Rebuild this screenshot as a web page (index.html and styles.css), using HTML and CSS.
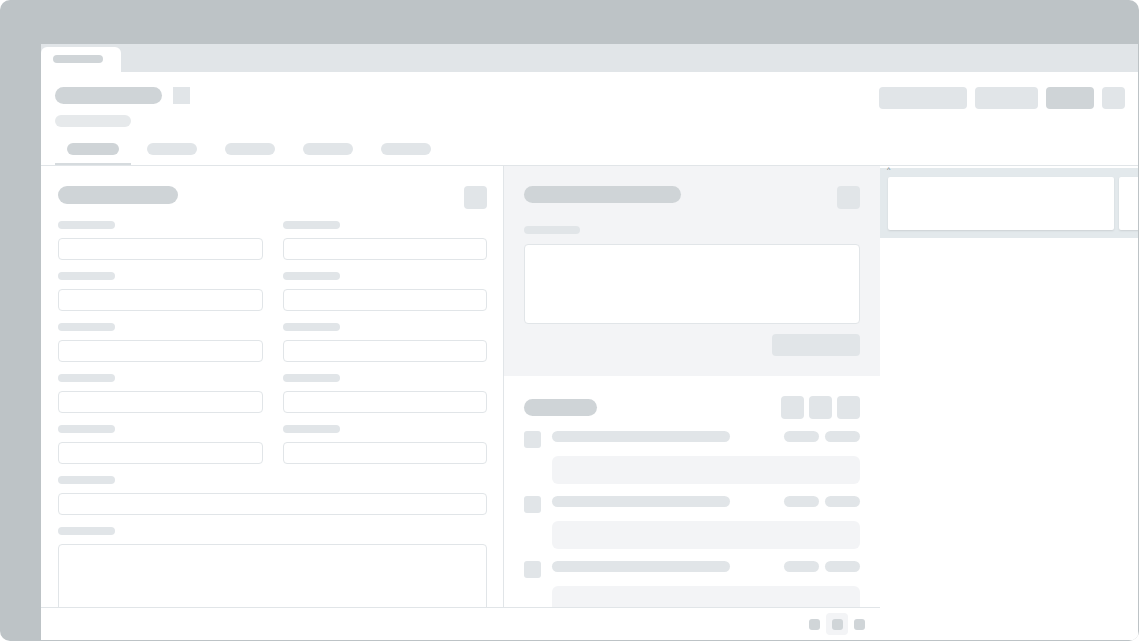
FILE: index.html
```html
<!DOCTYPE html>
<html lang="en">
<head>
    <meta charset="UTF-8">
    <meta name="viewport" content="width=device-width, initial-scale=1.0">
    <title>Loading record</title>
    <link rel="stylesheet" href="styles.css">
</head>
<body>
    <div class="frame">
        <div class="window">
            <div class="tabstrip">
                <div class="doc-tab"><span class="bone bone-tab"></span></div>
            </div>

            <header class="page-header">
                <div class="header-top">
                    <div class="title-group">
                        <span class="bone bone-title"></span>
                        <span class="bone-icon"></span>
                    </div>
                    <div class="actions">
                        <span class="btn btn-wide"></span>
                        <span class="btn btn-mid"></span>
                        <span class="btn btn-primary"></span>
                        <span class="btn btn-icon"></span>
                    </div>
                </div>
                <span class="bone bone-subtitle"></span>
                <nav class="tabs">
                    <div class="tab active"><span class="bone"></span></div>
                    <div class="tab"><span class="bone"></span></div>
                    <div class="tab"><span class="bone"></span></div>
                    <div class="tab"><span class="bone"></span></div>
                    <div class="tab"><span class="bone"></span></div>
                </nav>
            </header>

            <div class="main">
                <div class="workspace">
                    <div class="columns">
                        <!-- details form -->
                        <section class="form-panel">
                            <div class="panel-head">
                                <span class="bone bone-heading"></span>
                                <span class="square-btn"></span>
                            </div>
                            <div class="form-grid">
                                <div class="field"><span class="bone bone-label"></span><span class="input"></span></div>
                                <div class="field"><span class="bone bone-label"></span><span class="input"></span></div>
                                <div class="field"><span class="bone bone-label"></span><span class="input"></span></div>
                                <div class="field"><span class="bone bone-label"></span><span class="input"></span></div>
                                <div class="field"><span class="bone bone-label"></span><span class="input"></span></div>
                                <div class="field"><span class="bone bone-label"></span><span class="input"></span></div>
                                <div class="field"><span class="bone bone-label"></span><span class="input"></span></div>
                                <div class="field"><span class="bone bone-label"></span><span class="input"></span></div>
                                <div class="field"><span class="bone bone-label"></span><span class="input"></span></div>
                                <div class="field"><span class="bone bone-label"></span><span class="input"></span></div>
                                <div class="field full"><span class="bone bone-label"></span><span class="input"></span></div>
                                <div class="field full"><span class="bone bone-label"></span><span class="input textarea"></span></div>
                            </div>
                        </section>

                        <section class="side-column">
                            <!-- note composer -->
                            <div class="composer">
                                <div class="panel-head">
                                    <span class="bone bone-heading wide"></span>
                                    <span class="square-btn"></span>
                                </div>
                                <span class="bone bone-label short"></span>
                                <span class="input note"></span>
                                <div class="composer-foot"><span class="btn btn-send"></span></div>
                            </div>

                            <!-- activity list -->
                            <div class="activity">
                                <div class="panel-head">
                                    <span class="bone bone-heading small"></span>
                                    <div class="tool-group">
                                        <span class="square-btn"></span>
                                        <span class="square-btn"></span>
                                        <span class="square-btn"></span>
                                    </div>
                                </div>
                                <div class="entry">
                                    <div class="entry-row">
                                        <span class="avatar"></span>
                                        <span class="bone bone-line"></span>
                                        <span class="bone bone-meta"></span>
                                        <span class="bone bone-meta"></span>
                                    </div>
                                    <span class="entry-body"></span>
                                </div>
                                <div class="entry">
                                    <div class="entry-row">
                                        <span class="avatar"></span>
                                        <span class="bone bone-line"></span>
                                        <span class="bone bone-meta"></span>
                                        <span class="bone bone-meta"></span>
                                    </div>
                                    <span class="entry-body"></span>
                                </div>
                                <div class="entry">
                                    <div class="entry-row">
                                        <span class="avatar"></span>
                                        <span class="bone bone-line"></span>
                                        <span class="bone bone-meta"></span>
                                        <span class="bone bone-meta"></span>
                                    </div>
                                    <span class="entry-body"></span>
                                </div>
                            </div>
                        </section>
                    </div>

                    <footer class="pager">
                        <span class="dot"></span>
                        <span class="dot-wrap"><span class="dot"></span></span>
                        <span class="dot"></span>
                    </footer>
                </div>

                <aside class="board">
                    <span class="caret">^</span>
                    <div class="lane">
                        <div class="card"></div>
                        <div class="card"></div>
                    </div>
                </aside>
            </div>
        </div>
    </div>
</body>
</html>
```

FILE: styles.css
```css
body {
    margin: 0;
    padding: 0;
    background-color: #ffffff;
    font-family: "Liberation Sans", Arial, sans-serif;
}

.frame {
    width: 1139px;
    height: 641px;
    background-color: #bdc3c6;
    border-radius: 10px;
    overflow: hidden;
    box-sizing: border-box;
    padding: 44px 1px 1px 41px;
}

.window {
    width: 1097px;
    height: 596px;
    background-color: #ffffff;
    display: flex;
    flex-direction: column;
    overflow: hidden;
}

/* generic skeleton pieces */
.bone {
    display: block;
    background-color: #e1e5e8;
    border-radius: 999px;
}

.btn,
.square-btn {
    display: block;
    background-color: #e1e5e8;
    border-radius: 4px;
}

.input {
    display: block;
    box-sizing: border-box;
    height: 22px;
    border: 1.5px solid #e1e5e8;
    border-radius: 4px;
    background-color: #ffffff;
}

/* tab strip */
.tabstrip {
    height: 28px;
    box-sizing: border-box;
    padding-top: 3px;
    background-color: #e1e5e8;
    display: flex;
}

.doc-tab {
    width: 80px;
    background-color: #ffffff;
    border-radius: 6px 6px 0 0;
    padding: 8px 12px 0;
    box-sizing: border-box;
}

.bone-tab {
    width: 50px;
    height: 8px;
    background-color: #d0d5d8;
}

/* page header */
.page-header {
    padding: 15px 13px 0 14px;
    border-bottom: 1px solid #e1e5e8;
}

.header-top {
    display: flex;
    justify-content: space-between;
    align-items: flex-start;
}

.title-group {
    display: flex;
    gap: 11px;
}

.bone-title {
    width: 107px;
    height: 17px;
    background-color: #cfd4d7;
}

.bone-icon {
    display: block;
    width: 17px;
    height: 17px;
    background-color: #e1e5e8;
}

.actions {
    display: flex;
    gap: 8px;
}

.actions .btn {
    height: 22px;
}

.btn-wide { width: 88px; }
.btn-mid { width: 63px; }
.btn-primary { width: 48px; background-color: #cfd4d7; }
.btn-icon { width: 23px; }

.bone-subtitle {
    width: 76px;
    height: 12px;
    margin-top: 6px;
    background-color: #e6e9eb;
}

.tabs {
    display: flex;
    gap: 4px;
    margin-top: 8px;
}

.tab {
    padding: 8px 12px 10px;
}

.tab .bone {
    width: 50px;
    height: 12px;
}

.tab.active {
    padding-bottom: 8px;
    border-bottom: 2px solid #d6dbde;
}

.tab.active .bone {
    width: 52px;
    background-color: #cfd4d7;
}

/* body */
.main {
    flex: 1;
    display: flex;
    min-height: 0;
}

.workspace {
    width: 839px;
    display: flex;
    flex-direction: column;
}

.columns {
    flex: 1;
    display: flex;
    min-height: 0;
    overflow: hidden;
}

.panel-head {
    display: flex;
    justify-content: space-between;
    align-items: flex-start;
}

.square-btn {
    width: 23px;
    height: 23px;
}

.bone-heading {
    width: 120px;
    height: 18px;
    background-color: #cfd4d7;
}

.bone-heading.wide {
    width: 157px;
    height: 17px;
}

.bone-heading.small {
    width: 73px;
    height: 17px;
    margin-top: 3px;
}

.bone-label {
    width: 57px;
    height: 8px;
}

/* left form */
.form-panel {
    width: 463px;
    box-sizing: border-box;
    border-right: 1px solid #e1e5e8;
    padding: 20px 16px 0 17px;
    flex-shrink: 0;
}

.form-grid {
    display: grid;
    grid-template-columns: 1fr 1fr;
    column-gap: 20px;
    row-gap: 12px;
    margin-top: 12px;
}

.field {
    display: flex;
    flex-direction: column;
    gap: 9px;
}

.field.full {
    grid-column: 1 / 3;
}

.input.textarea {
    height: 90px;
}

/* middle column */
.side-column {
    width: 376px;
    box-sizing: border-box;
}

.composer {
    background-color: #f3f4f6;
    padding: 20px;
}

.bone-label.short {
    width: 56px;
    margin-top: 17px;
}

.input.note {
    height: 80px;
    margin-top: 10px;
}

.composer-foot {
    display: flex;
    justify-content: flex-end;
    margin-top: 10px;
}

.btn-send {
    width: 88px;
    height: 22px;
}

.activity {
    padding: 20px 20px 0;
}

.tool-group {
    display: flex;
    gap: 5px;
}

.entry {
    margin-top: 12px;
}

.entry-row {
    display: flex;
    align-items: flex-start;
}

.avatar {
    display: block;
    width: 17px;
    height: 17px;
    border-radius: 3px;
    background-color: #e1e5e8;
}

.bone-line {
    width: 178px;
    height: 11px;
    margin-left: 11px;
    margin-right: auto;
}

.bone-meta {
    width: 35px;
    height: 11px;
    margin-left: 6px;
}

.entry-body {
    display: block;
    height: 28px;
    margin: 8px 0 0 28px;
    border-radius: 6px;
    background-color: #f3f4f6;
}

/* bottom pager */
.pager {
    height: 32px;
    border-top: 1px solid #e1e5e8;
    display: flex;
    justify-content: flex-end;
    align-items: center;
    gap: 6px;
    padding-right: 15px;
}

.dot {
    display: block;
    width: 11px;
    height: 11px;
    border-radius: 3px;
    background-color: #d0d5d8;
}

.dot-wrap {
    width: 22px;
    height: 22px;
    border-radius: 4px;
    background-color: #f3f4f6;
    display: flex;
    align-items: center;
    justify-content: center;
}

/* right board */
.board {
    flex: 1;
    position: relative;
    padding-top: 2px;
    overflow: hidden;
}

.caret {
    position: absolute;
    left: 7px;
    top: 0;
    font-size: 7px;
    line-height: 8px;
    color: #6b7378;
}

.lane {
    height: 70px;
    box-sizing: border-box;
    background-color: #e3e9ec;
    padding: 9px 0 8px 8px;
    display: flex;
    gap: 5px;
}

.card {
    width: 226px;
    flex-shrink: 0;
    background-color: #ffffff;
    border-radius: 2px;
    box-shadow: 0 1px 2px rgba(0, 0, 0, 0.1);
}
```
